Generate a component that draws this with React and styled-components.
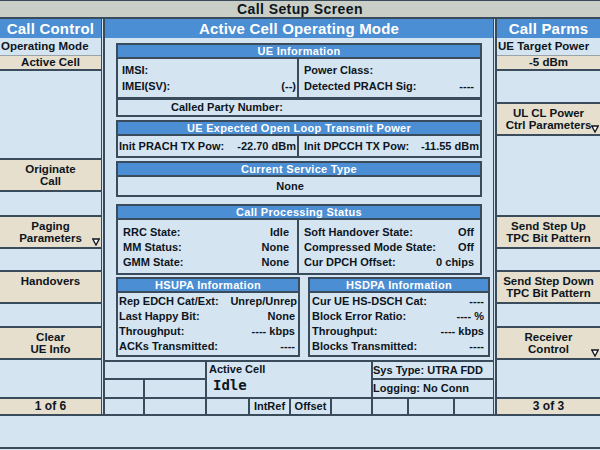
import styled, { createGlobalStyle } from 'styled-components';

const LIGHT = '#d5e4f1';
const BLUE = '#4b8ed3';
const BEIGE = '#e6dfcd';
const LINE = '#3a4b5c';
const TITLE = '#c9cec6';
const INK = '#0d1520';

const GlobalStyle = createGlobalStyle`
  html, body {
    margin: 0;
    padding: 0;
    background: ${LIGHT};
  }
  body {
    font-family: "Liberation Sans", Arial, sans-serif;
    font-weight: bold;
    color: ${INK};
  }
`;

const Screen = styled.div`
  width: 600px;
  height: 450px;
  display: flex;
  flex-direction: column;
  overflow: hidden;
  background: ${LIGHT};
`;

const TitleBar = styled.div`
  height: 16px;
  border-top: 1px solid ${LINE};
  border-bottom: 2px solid ${LINE};
  background: ${TITLE};
  font-size: 14px;
  line-height: 16px;
  letter-spacing: 0.4px;
  text-align: center;
`;

const Main = styled.div`
  display: flex;
  height: 395px;
`;

const Column = styled.div`
  width: ${p => p.$width}px;
  display: flex;
  flex-direction: column;
`;

const Divider = styled.div`
  width: 1px;
  border-left: 1px solid ${LINE};
  border-right: 2px solid ${LINE};
  background: ${LIGHT};
`;

const ColumnHeader = styled.div`
  height: 19px;
  background: ${BLUE};
  color: #fff;
  font-size: 15px;
  line-height: 19px;
  text-align: center;
  letter-spacing: 0.2px;
  white-space: nowrap;
`;

const FieldLabel = styled.div`
  height: 17px;
  padding-left: 1px;
  font-size: 11.5px;
  line-height: 17px;
  white-space: nowrap;
`;

const FieldValue = styled.div`
  height: 13px;
  border-top: 1px solid #9aa4a8;
  border-bottom: 2px solid ${LINE};
  background: ${BEIGE};
  font-size: 11.5px;
  line-height: 13px;
  text-align: center;
`;

const Spacer = styled.div`
  height: ${p => p.$h}px;
  flex: none;
`;

const SoftKey = styled.div`
  position: relative;
  height: 27px;
  padding-top: 3px;
  border-top: 2px solid ${LINE};
  border-bottom: 2px solid ${LINE};
  background: ${BEIGE};
  font-size: 11.5px;
  line-height: 12px;
  text-align: center;
  white-space: nowrap;
`;

const MoreMark = styled.svg`
  position: absolute;
  right: 1px;
  bottom: 1px;
  width: 8px;
  height: 8px;
`;

const PageKey = styled.div`
  height: 15px;
  border-top: 2px solid ${LINE};
  background: ${BEIGE};
  font-size: 12px;
  line-height: 15px;
  text-align: center;
`;

const Center = styled.div`
  width: 388px;
  display: flex;
  flex-direction: column;
`;

const Panel = styled.div`
  height: 317px;
  padding: 5px 11px 0;
  display: flex;
  flex-direction: column;
`;

const Box = styled.div`
  margin-top: ${p => p.$gap || 0}px;
  border: 2px solid ${LINE};
  background: ${LIGHT};
  flex: none;
`;

const BoxHeader = styled.div`
  height: 12px;
  border-bottom: 2px solid ${LINE};
  background: ${BLUE};
  color: #fff;
  font-size: 11px;
  line-height: 12px;
  letter-spacing: 0.3px;
  text-align: center;
  white-space: nowrap;
`;

const TwoCol = styled.div`
  display: grid;
  grid-template-columns: 181px 1fr;
  height: ${p => p.$h}px;
`;

const Col = styled.div`
  padding-top: ${p => p.$pt || 0}px;
  border-right: ${p => (p.$divider ? `2px solid ${LINE}` : 'none')};
`;

const Row = styled.div`
  height: ${p => p.$h || 15}px;
  display: flex;
  justify-content: space-between;
  align-items: center;
  padding: 0 ${p => p.$pr ?? 8}px 0 ${p => p.$pl ?? 4}px;
  font-size: 11px;
  white-space: nowrap;
`;

const CalledRow = styled.div`
  height: 15px;
  border-top: 3px solid ${LINE};
  padding-left: 53px;
  font-size: 11px;
  line-height: 15px;
`;

const CenteredBody = styled.div`
  height: 18px;
  font-size: 11px;
  line-height: 18px;
  text-align: center;
  padding-right: 18px;
`;

const PairRow = styled.div`
  display: flex;
  gap: 8px;
  margin-top: 2px;
`;

const PairBox = styled(Box)`
  width: ${p => p.$w}px;
`;

const PairBody = styled.div`
  height: 62px;
`;

const StatusGrid = styled.div`
  display: grid;
  grid-template-columns: 38px 60px 41px 39px 39px 39px 34px 44px 38px;
  grid-template-rows: 16px 17px 15px;
  gap: 2px;
  padding-top: 2px;
  background: ${LINE};
`;

const Cell = styled.div`
  grid-column: ${p => p.$col};
  grid-row: ${p => p.$row};
  background: ${LIGHT};
  font-size: 11px;
  line-height: ${p => p.$lh || 15}px;
  padding-left: ${p => p.$pl || 0}px;
  text-align: ${p => (p.$center ? 'center' : 'left')};
  white-space: nowrap;
  overflow: hidden;
`;

const BigState = styled.div`
  font-family: "DejaVu Sans Mono", "Liberation Mono", monospace;
  font-size: 14px;
  line-height: 18px;
  padding-left: 4px;
`;

const BottomBand = styled.div`
  height: 31px;
  border-top: 2px solid ${LINE};
  border-bottom: 2px solid ${LINE};
  background: ${LIGHT};
`;

const More = () => (
  <MoreMark viewBox="0 0 8 8">
    <polygon points="0.8,1 7.2,1 4,7" fill="#fff" stroke={INK} strokeWidth="1.3" />
  </MoreMark>
);

const Key = ({ lines, more }) => (
  <SoftKey>
    {lines.map(l => <div key={l}>{l}</div>)}
    {more && <More />}
  </SoftKey>
);

const Line = ({ label, value, ...rest }) => (
  <Row {...rest}>
    <span>{label}</span>
    <span>{value}</span>
  </Row>
);

export default function App() {
  return (
    <Screen>
      <GlobalStyle />
      <TitleBar>Call Setup Screen</TitleBar>
      <Main>
        <Column $width={101}>
          <ColumnHeader>Call Control</ColumnHeader>
          <FieldLabel>Operating Mode</FieldLabel>
          <FieldValue>Active Cell</FieldValue>
          <Spacer $h={87} />
          <Key lines={['Originate', 'Call']} />
          <Spacer $h={23} />
          <Key lines={['Paging', 'Parameters']} more />
          <Spacer $h={21} />
          <Key lines={['Handovers']} />
          <Spacer $h={22} />
          <Key lines={['Clear', 'UE Info']} />
          <Spacer $h={37} />
          <PageKey>1 of 6</PageKey>
        </Column>
        <Divider />
        <Center>
          <ColumnHeader>Active Cell Operating Mode</ColumnHeader>
          <Panel>
            <Box>
              <BoxHeader>UE Information</BoxHeader>
              <TwoCol $h={38}>
                <Col $divider $pt={3}>
                  <Line $h={16} label="IMSI:" value="" />
                  <Line $h={16} $pr={1} label="IMEI(SV):" value="(--)" />
                </Col>
                <Col $pt={3}>
                  <Line $h={16} $pl={5} $pr={6} label="Power Class:" value="" />
                  <Line $h={16} $pl={5} $pr={6} label="Detected PRACH Sig:" value="----" />
                </Col>
              </TwoCol>
              <CalledRow>Called Party Number:</CalledRow>
            </Box>
            <Box $gap={3}>
              <BoxHeader>UE Expected Open Loop Transmit Power</BoxHeader>
              <TwoCol $h={20}>
                <Col $divider>
                  <Line $h={20} $pl={1} $pr={1} label="Init PRACH TX Pow:" value="-22.70 dBm" />
                </Col>
                <Col>
                  <Line $h={20} $pl={5} $pr={1} label="Init DPCCH TX Pow:" value="-11.55 dBm" />
                </Col>
              </TwoCol>
            </Box>
            <Box $gap={3}>
              <BoxHeader>Current Service Type</BoxHeader>
              <CenteredBody>None</CenteredBody>
            </Box>
            <Box $gap={7}>
              <BoxHeader>Call Processing Status</BoxHeader>
              <TwoCol $h={53}>
                <Col $divider $pt={4}>
                  <Line $pl={5} label="RRC State:" value="Idle" />
                  <Line $pl={5} label="MM Status:" value="None" />
                  <Line $pl={5} label="GMM State:" value="None" />
                </Col>
                <Col $pt={4}>
                  <Line $pl={5} $pr={6} label="Soft Handover State:" value="Off" />
                  <Line $pl={5} $pr={6} label="Compressed Mode State:" value="Off" />
                  <Line $pl={5} $pr={6} label="Cur DPCH Offset:" value="0 chips" />
                </Col>
              </TwoCol>
            </Box>
            <PairRow>
              <PairBox $w={180}>
                <BoxHeader>HSUPA Information</BoxHeader>
                <PairBody>
                  <Line $pl={1} $pr={1} label="Rep EDCH Cat/Ext:" value="Unrep/Unrep" />
                  <Line $pl={1} $pr={3} label="Last Happy Bit:" value="None" />
                  <Line $pl={1} $pr={3} label="Throughput:" value="---- kbps" />
                  <Line $pl={1} $pr={3} label="ACKs Transmitted:" value="----" />
                </PairBody>
              </PairBox>
              <PairBox $w={178}>
                <BoxHeader>HSDPA Information</BoxHeader>
                <PairBody>
                  <Line $pl={2} $pr={4} label="Cur UE HS-DSCH Cat:" value="----" />
                  <Line $pl={2} $pr={4} label="Block Error Ratio:" value="---- %" />
                  <Line $pl={2} $pr={4} label="Throughput:" value="---- kbps" />
                  <Line $pl={2} $pr={4} label="Blocks Transmitted:" value="----" />
                </PairBody>
              </PairBox>
            </PairRow>
          </Panel>
          <StatusGrid>
            <Cell $col="1 / 3" $row="1" />
            <Cell $col="3 / 7" $row="1 / 3" $pl={2} $lh={14}>
              Active Cell
              <BigState>Idle</BigState>
            </Cell>
            <Cell $col="7 / 10" $row="1" $lh={16}>Sys Type: UTRA FDD</Cell>
            <Cell $col="1" $row="2" />
            <Cell $col="2" $row="2" />
            <Cell $col="7 / 10" $row="2" $lh={17}>Logging: No Conn</Cell>
            <Cell $col="1" $row="3" />
            <Cell $col="2" $row="3" />
            <Cell $col="3" $row="3" />
            <Cell $col="4" $row="3" $center>IntRef</Cell>
            <Cell $col="5" $row="3" $center>Offset</Cell>
            <Cell $col="6" $row="3" />
            <Cell $col="7" $row="3" />
            <Cell $col="8" $row="3" />
            <Cell $col="9" $row="3" />
          </StatusGrid>
        </Center>
        <Divider />
        <Column $width={103}>
          <ColumnHeader>Call Parms</ColumnHeader>
          <FieldLabel>UE Target Power</FieldLabel>
          <FieldValue>-5 dBm</FieldValue>
          <Spacer $h={31} />
          <Key lines={['UL CL Power', 'Ctrl Parameters']} more />
          <Spacer $h={79} />
          <Key lines={['Send Step Up', 'TPC Bit Pattern']} />
          <Spacer $h={21} />
          <Key lines={['Send Step Down', 'TPC Bit Pattern']} />
          <Spacer $h={22} />
          <Key lines={['Receiver', 'Control']} more />
          <Spacer $h={37} />
          <PageKey>3 of 3</PageKey>
        </Column>
      </Main>
      <BottomBand />
    </Screen>
  );
}
